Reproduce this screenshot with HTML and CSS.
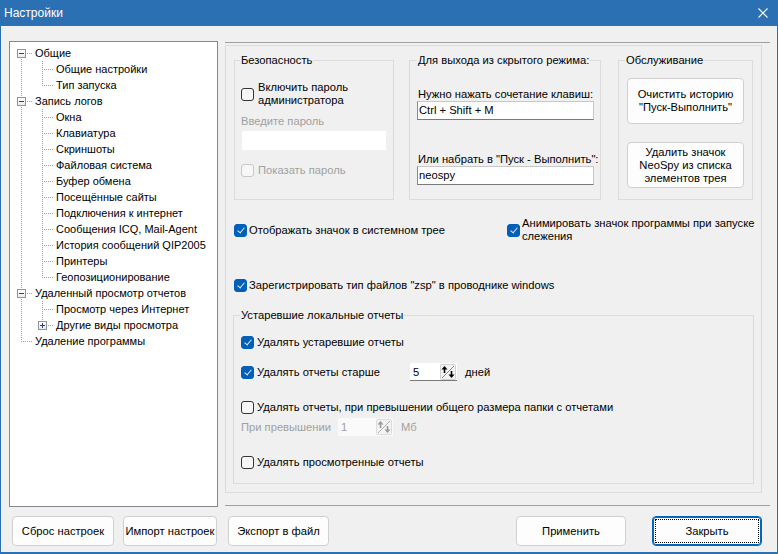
FILE: index.html
```html
<!DOCTYPE html>
<html lang="ru">
<head>
<meta charset="utf-8">
<title>Настройки</title>
<link rel="stylesheet" href="styles.css">
</head>
<body>
<div class="window">
  <div class="titlebar">
    <span class="title">Настройки</span>
    <svg class="close" width="10" height="10" viewBox="0 0 10 10"><path d="M0.5 0.5L9.5 9.5M9.5 0.5L0.5 9.5" stroke="#fff" stroke-width="1.1"/></svg>
  </div>
  <div class="body">
    <div class="main">
      <div class="tree">
        <div class="row"><span class="c f"><i class="bx"></i></span><span class="lbl">Общие</span></div>
        <div class="row"><span class="c v"></span><span class="c t"></span><span class="lbl">Общие настройки</span></div>
        <div class="row"><span class="c v"></span><span class="c l"></span><span class="lbl">Тип запуска</span></div>
        <div class="row"><span class="c t"><i class="bx"></i></span><span class="lbl">Запись логов</span></div>
        <div class="row"><span class="c v"></span><span class="c t"></span><span class="lbl">Окна</span></div>
        <div class="row"><span class="c v"></span><span class="c t"></span><span class="lbl">Клавиатура</span></div>
        <div class="row"><span class="c v"></span><span class="c t"></span><span class="lbl">Скриншоты</span></div>
        <div class="row"><span class="c v"></span><span class="c t"></span><span class="lbl">Файловая система</span></div>
        <div class="row"><span class="c v"></span><span class="c t"></span><span class="lbl">Буфер обмена</span></div>
        <div class="row"><span class="c v"></span><span class="c t"></span><span class="lbl">Посещённые сайты</span></div>
        <div class="row"><span class="c v"></span><span class="c t"></span><span class="lbl">Подключения к интернет</span></div>
        <div class="row"><span class="c v"></span><span class="c t"></span><span class="lbl">Сообщения ICQ, Mail-Agent</span></div>
        <div class="row"><span class="c v"></span><span class="c t"></span><span class="lbl">История сообщений QIP2005</span></div>
        <div class="row"><span class="c v"></span><span class="c t"></span><span class="lbl">Принтеры</span></div>
        <div class="row"><span class="c v"></span><span class="c l"></span><span class="lbl">Геопозиционирование</span></div>
        <div class="row"><span class="c t"><i class="bx"></i></span><span class="lbl">Удаленный просмотр отчетов</span></div>
        <div class="row"><span class="c v"></span><span class="c t"></span><span class="lbl">Просмотр через Интернет</span></div>
        <div class="row"><span class="c v"></span><span class="c l"><i class="bx plus"></i></span><span class="lbl">Другие виды просмотра</span></div>
        <div class="row"><span class="c l"></span><span class="lbl">Удаление программы</span></div>
      </div>
      <div class="panel">
        <div class="page">
          <div class="groups">
            <fieldset class="grp sec">
              <legend>Безопасность</legend>
              <div class="chk first"><span class="box"></span><span class="txt">Включить пароль<br>администратора</span></div>
              <div class="hint">Введите пароль</div>
              <div class="pwd"></div>
              <div class="chk dis show"><span class="box"></span><span class="txt">Показать пароль</span></div>
            </fieldset>
            <fieldset class="grp exit">
              <legend>Для выхода из скрытого режима:</legend>
              <div class="lab lab1">Нужно нажать сочетание клавиш:</div>
              <div class="edit">Ctrl + Shift + M</div>
              <div class="lab lab2">Или набрать в "Пуск - Выполнить":</div>
              <div class="edit">neospy</div>
            </fieldset>
            <fieldset class="grp svc">
              <legend>Обслуживание</legend>
              <div class="btn">Очистить историю<br>"Пуск-Выполнить"</div>
              <div class="btn">Удалить значок<br>NeoSpy из списка<br>элементов трея</div>
            </fieldset>
          </div>
          <div class="opts">
            <div class="orow1">
              <div class="chk on left"><span class="box"></span><span class="txt">Отображать значок в системном трее</span></div>
              <div class="chk on anim"><span class="box"></span><span class="txt">Анимировать значок программы при запуске<br>слежения</span></div>
            </div>
            <div class="chk on orow3"><span class="box"></span><span class="txt">Зарегистрировать тип файлов "zsp" в проводнике windows</span></div>
          </div>
          <fieldset class="grp old">
            <legend>Устаревшие локальные отчеты</legend>
            <div class="chk on r1"><span class="box"></span><span class="txt">Удалять устаревшие отчеты</span></div>
            <div class="chk on r2"><span class="box"></span><span class="txt">Удалять отчеты старше</span>
              <div class="spin"><span>5</span><svg class="spinic" width="16" height="16" viewBox="0 0 16 16"><rect x="0.5" y="0.5" width="15" height="15" rx="1" fill="#f3f3f3" stroke="#cfcfcf"/><path d="M14 2L2 14" stroke="#8a8a8a"/><path d="M4.5 4V9" stroke="#000" stroke-width="1.6"/><path d="M1.5 5.5L4.5 2L7.5 5.5Z" fill="#000"/><path d="M11.5 7V12" stroke="#000" stroke-width="1.6"/><path d="M8.5 10.5L11.5 14L14.5 10.5Z" fill="#000"/></svg></div>
              <span class="unit">дней</span>
            </div>
            <div class="chk r3"><span class="box"></span><span class="txt">Удалять отчеты, при превышении общего размера папки с отчетами</span></div>
            <div class="r4"><span class="hint2">При превышении</span>
              <div class="spin off"><span>1</span><svg class="spinic" width="16" height="16" viewBox="0 0 16 16"><rect x="0.5" y="0.5" width="15" height="15" rx="1" fill="#f3f3f3" stroke="#dcdcdc"/><path d="M14 2L2 14" stroke="#b0b0b0"/><path d="M4.5 4V9" stroke="#9a9a9a" stroke-width="1.6"/><path d="M1.5 5.5L4.5 2L7.5 5.5Z" fill="#9a9a9a"/><path d="M11.5 7V12" stroke="#9a9a9a" stroke-width="1.6"/><path d="M8.5 10.5L11.5 14L14.5 10.5Z" fill="#9a9a9a"/></svg></div>
              <span class="unit">Мб</span>
            </div>
            <div class="chk r5"><span class="box"></span><span class="txt">Удалять просмотренные отчеты</span></div>
          </fieldset>
        </div>
      </div>
    </div>
    <div class="bbar">
      <div class="btn b1">Сброс настроек</div>
      <div class="btn b2">Импорт настроек</div>
      <div class="btn b3">Экспорт в файл</div>
      <div class="spacer"></div>
      <div class="btn b4">Применить</div>
      <div class="btn b5">Закрыть</div>
    </div>
  </div>
</div>
</body>
</html>
```
FILE: styles.css
```css
* { box-sizing: border-box; }
body {
  margin: 0;
  font-family: "Liberation Sans", Arial, sans-serif;
  font-size: 11.2px;
  color: #000;
  background: #f0f0f0;
}
.window {
  width: 778px;
  height: 554px;
  background: #f0f0f0;
  border: 1px solid #2b70b2;
  border-top: 0;
  border-bottom-width: 2px;
  display: flex;
  flex-direction: column;
}
.titlebar {
  height: 26px;
  flex: none;
  background: #2b70b2;
  color: #fff;
  display: flex;
  align-items: center;
  justify-content: space-between;
  padding: 0 9px 0 3px;
  font-size: 12px;
}
.close { display: block; }
.body {
  flex: 1;
  padding: 15px 7px 0 8px;
  display: flex;
  flex-direction: column;
}
.main {
  display: flex;
  gap: 7px;
  height: 466px;
  flex: none;
}

/* tree */
.tree {
  width: 209px;
  height: 466px;
  flex: none;
  border: 1px solid #828790;
  background: #fff;
  padding: 3px 0 0 1px;
  font-size: 11px;
}
.row {
  display: flex;
  align-items: center;
  height: 16px;
  white-space: nowrap;
}
.c {
  width: 21px;
  height: 16px;
  flex: none;
  position: relative;
}
.c::before, .c::after { content: ""; position: absolute; }
.v::before, .t::before, .l::before, .f::before {
  left: 10px;
  top: 0;
  width: 1px;
  height: 16px;
  background: repeating-linear-gradient(to bottom, #a0a0a0 0 1px, transparent 1px 2px);
}
.l::before { height: 9px; }
.f::before { top: 8px; height: 8px; }
.t::after, .l::after, .f::after {
  left: 11px;
  top: 8px;
  width: 10px;
  height: 1px;
  background: repeating-linear-gradient(to right, transparent 0 1px, #a0a0a0 1px 2px);
}
.bx {
  position: absolute;
  left: 6px;
  top: 4px;
  width: 9px;
  height: 9px;
  border: 1px solid #939393;
  background: linear-gradient(#fff, #ececec);
  z-index: 1;
}
.bx::before {
  content: "";
  position: absolute;
  left: 1px;
  top: 3px;
  width: 5px;
  height: 1px;
  background: #1f3f93;
}
.bx.plus::after {
  content: "";
  position: absolute;
  left: 3px;
  top: 1px;
  width: 1px;
  height: 5px;
  background: #1f3f93;
}
.lbl { margin-left: 3px; }

/* right panel */
.panel {
  flex: 1;
  margin-top: 1px;
  height: 464px;
  border-top: 1px solid #a0a0a0;
  border-bottom: 1px solid #a0a0a0;
  padding: 2px 8px 0 0;
}
.page {
  height: 448px;
  border: 1px solid #dcdcdc;
  padding-top: 7px;
}
.groups {
  display: flex;
  height: 147px;
  margin-left: 8px;
}
fieldset.grp {
  margin: 0;
  padding: 0 6px;
  border: 1px solid #dcdcdc;
  min-width: 0;
  flex: none;
}
legend {
  padding: 0 1px;
  line-height: 14px;
  white-space: nowrap;
}
fieldset.sec { width: 160px; margin-right: 15px; }
.sec legend { margin-left: -1px; }
fieldset.exit { width: 192px; margin-right: 17px; padding: 0 5px 0 7px; }
fieldset.svc { width: 135px; padding: 0 8px; }
.svc legend { margin-left: -2px; }

/* checkboxes */
.chk {
  display: flex;
  align-items: center;
  line-height: 14px;
  white-space: nowrap;
}
.box {
  width: 13px;
  height: 13px;
  flex: none;
  border: 1px solid #333;
  border-radius: 3px;
  background: #f7f7f7;
  position: relative;
  margin-right: 3px;
}
.on .box {
  background: #005fb8;
  border-color: #005fb8;
}
.on .box::after {
  content: "";
  position: absolute;
  left: 3.5px;
  top: 1.5px;
  width: 3px;
  height: 6px;
  border: solid #dfe8f4;
  border-width: 0 1px 1px 0;
  transform: rotate(40deg);
}
.dis { color: #a0a0a0; }
.dis .box { border-color: #c8c8c8; background: #f7f7f7; }

/* security */
.sec .first { margin-top: 14px; line-height: 13px; }
.sec .first .box { margin-right: 4px; }
.hint { color: #a0a0a0; margin-top: 7px; line-height: 14px; }
.pwd {
  margin: 3px 0 0 1px;
  width: 144px;
  height: 19px;
  background: #fff;
}
.sec .show { margin-top: 13px; }
.sec .show .box { margin-right: 4px; }

/* exit */
.lab { line-height: 14px; padding-left: 1px; white-space: nowrap; }
.lab1 { margin-top: 20px; }
.lab2 { margin-top: 32px; }
.edit {
  height: 19px;
  width: 177px;
  background: #fff;
  border: 1px solid;
  border-color: #c8c8c8 #c8c8c8 #7a7a7a #8a8a8a;
  padding-left: 1px;
  line-height: 17px;
}

/* buttons */
.btn {
  background: #fdfdfd;
  border: 1px solid #d0d0d0;
  border-radius: 4px;
  display: flex;
  align-items: center;
  justify-content: center;
  text-align: center;
}
.svc .btn {
  width: 117px;
  height: 46px;
  line-height: 13px;
  margin-top: 11px;
}
.svc .btn + .btn { margin-top: 18px; }

/* options */
.opts { padding-left: 8px; }
.orow1 {
  display: flex;
  align-items: center;
  height: 26px;
  margin-top: 17px;
}
.opts .box { margin-right: 2px; }
.orow1 .left { width: 273px; flex: none; }
.anim .txt { line-height: 13px; }
.orow3 { margin-top: 35px; }

/* old reports */
fieldset.old {
  margin: 16px 0 0 7px;
  width: 521px;
  height: 176px;
  padding: 0 6px 0 7px;
}
.old legend { margin-left: -1px; }
.old .r1 { margin-top: 13px; }
.old .r2 { margin-top: 14px; height: 18px; }
.r2 .txt { width: 153px; }
.spin {
  width: 47px;
  height: 18px;
  background: #fff;
  border-bottom: 1px solid #7a7a7a;
  display: flex;
  align-items: center;
  justify-content: space-between;
  padding: 0 1px 0 3px;
}
.spinic { display: block; }
.unit { margin-left: 8px; }
.old .r3 { margin-top: 19px; }
.r4 {
  margin-top: 4px;
  height: 18px;
  display: flex;
  align-items: center;
  color: #a0a0a0;
}
.hint2 { width: 97px; }
.spin.off {
  width: 55px;
  background: #fafafa;
  border-bottom-color: #fafafa;
}
.old .r5 { margin-top: 19px; }

/* bottom bar */
.bbar {
  display: flex;
  height: 30px;
  margin-top: 9px;
  padding-left: 3px;
}
.bbar .btn { height: 30px; }
.b1 { width: 102px; }
.b2 { width: 94px; margin-left: 9px; white-space: nowrap; }
.b3 { width: 101px; margin-left: 11px; }
.spacer { flex: 1; }
.b4 { width: 110px; }
.b5 {
  width: 110px;
  margin-left: 26px;
  margin-right: 8px;
  border-color: #0067c0;
  box-shadow: inset 0 0 0 1px #0067c0;
  position: relative;
}
.b5::after {
  content: "";
  position: absolute;
  inset: 2px;
  border: 1px dotted #000;
}
```
